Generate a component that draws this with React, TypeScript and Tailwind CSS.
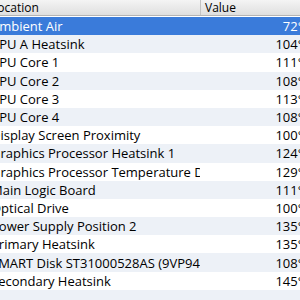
const rows: [string, string][] = [
  ["Ambient Air", "72°F"],
  ["CPU A Heatsink", "104°F"],
  ["CPU Core 1", "111°F"],
  ["CPU Core 2", "108°F"],
  ["CPU Core 3", "113°F"],
  ["CPU Core 4", "108°F"],
  ["Display Screen Proximity", "100°F"],
  ["Graphics Processor Heatsink 1", "124°F"],
  ["Graphics Processor Temperature Diode", "129°F"],
  ["Main Logic Board", "111°F"],
  ["Optical Drive", "100°F"],
  ["Power Supply Position 2", "135°F"],
  ["Primary Heatsink", "135°F"],
  ["SMART Disk ST31000528AS (9VP9445T)", "108°F"],
  ["Secondary Heatsink", "145°F"],
];

export default function App() {
  return (
    <div className="h-[300px] w-[300px] overflow-hidden bg-white font-['Lucida_Grande','Open_Sans',sans-serif] text-[13px] text-black">
      <div className="ml-[-9px] w-[322px]">
        <div className="flex h-[16px] border-b border-[#b4b4b4] bg-gradient-to-b from-[#f4f4f4] to-[#dfdfdf] text-[12px] leading-[15px]">
          <div className="w-[209px] shrink-0">Location</div>
          <div className="flex-1 border-l border-[#c4c4c4] pl-[4px]">Value</div>
        </div>
        <div className="h-[1px] bg-white" />
        {rows.map(([name, value], i) => (
          <div
            key={name}
            className={
              "flex h-[18.2px] items-center leading-[18px] " +
              (i === 0 ? "bg-[#3a7bda] text-white" : i % 2 === 1 ? "bg-[#edf1f7]" : "bg-white")
            }
          >
            <div className="w-[209px] shrink-0 overflow-hidden whitespace-nowrap">{name}</div>
            <div className="flex-1 overflow-hidden whitespace-nowrap pr-[3px] text-right">{value}</div>
          </div>
        ))}
        <div className="h-[18px] bg-[#edf1f7]" />
      </div>
    </div>
  );
}
